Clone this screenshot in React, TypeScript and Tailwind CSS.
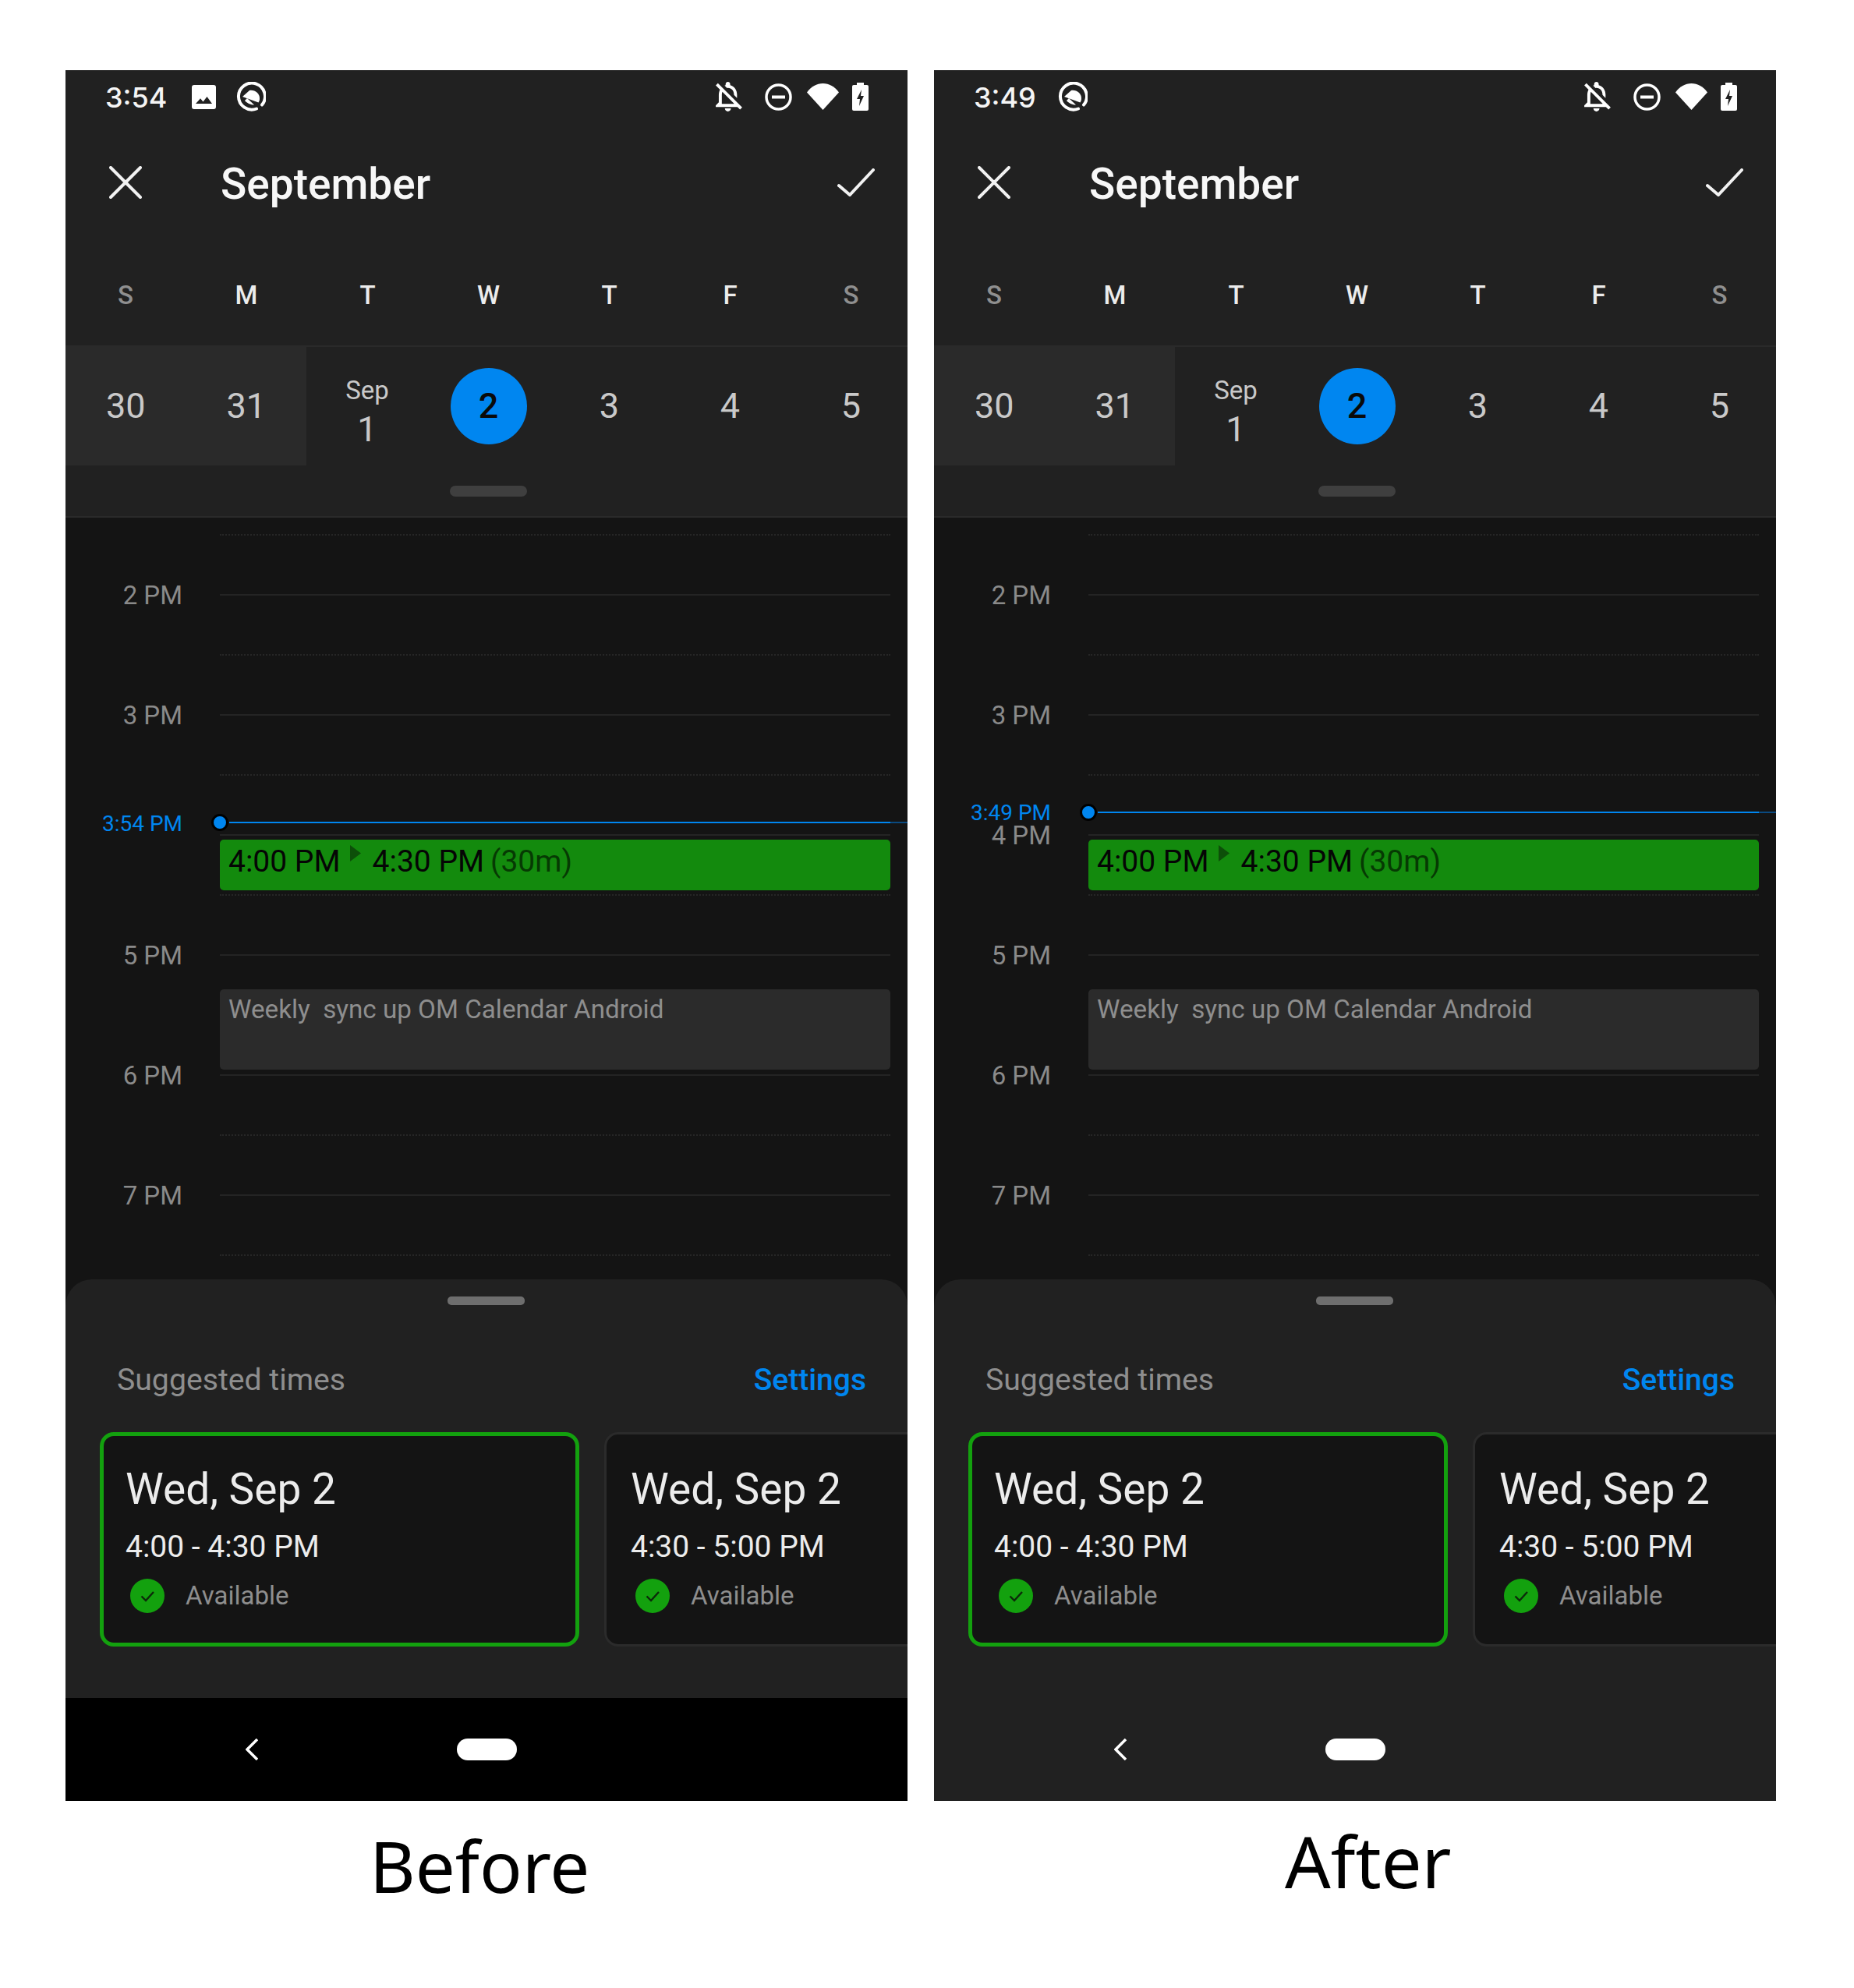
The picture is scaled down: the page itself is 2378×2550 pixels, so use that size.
import React from "react";

const hours: { label: string; half?: boolean }[] = [
  { label: "", half: true },
  { label: "2 PM" },
  { label: "", half: true },
  { label: "3 PM" },
  { label: "", half: true },
  { label: "4 PM" },
  { label: "", half: true },
  { label: "5 PM" },
  { label: "", half: true },
  { label: "6 PM" },
  { label: "", half: true },
  { label: "7 PM" },
  { label: "", half: true },
];

function ImageIcon() {
  return (
    <svg viewBox="0 0 31 31" className="w-[31px] h-[31px] mr-[26px]">
      <path fillRule="evenodd" fill="#fff" d="M3 0h25a3 3 0 0 1 3 3v25a3 3 0 0 1-3 3H3a3 3 0 0 1-3-3V3a3 3 0 0 1 3-3zM5 24h21l-6.5-9-5 6.5-3.5-4.2z" />
    </svg>
  );
}

function QIcon() {
  return (
    <svg viewBox="0 0 38 38" className="w-[38px] h-[38px]" fill="none">
      <path d="M33 29.5A17 17 0 1 0 26 34.5" stroke="#fff" strokeWidth="4" strokeLinecap="round" />
      <path fill="#fff" d="M8 19 L17 11 C24 10 30 15 30 21 C30 23.5 29.5 25 28.5 26.5 Z" />
      <path fill="#fff" d="M11 24 L14 21 L23 29.5 C19 29.5 14.5 28 11 24 Z" />
    </svg>
  );
}

function StatusRight() {
  return (
    <div className="flex items-center">
      <svg viewBox="4 2.5 17.4 19.5" className="w-[34px] h-[38px] mr-[29px]" fill="#fff">
        <path d="M12 22c1.1 0 2-.9 2-2h-4c0 1.1.9 2 2 2zm0-15.5c2.49 0 4 2.02 4 4.5v.1l2 2V11c0-3.07-1.63-5.64-4.5-6.32V4c0-.83-.67-1.5-1.5-1.5s-1.5.67-1.5 1.5v.68c-.24.06-.47.15-.69.23l1.64 1.64c.18-.02.36-.05.55-.05zM5.41 3.35L4 4.76l2.81 2.81C6.29 8.57 6 9.74 6 11v5l-2 2v1h14.24l1.74 1.74 1.41-1.41L5.41 3.35zM16 17H8v-6c0-.68.12-1.32.34-1.9L16 16.76V17z" />
      </svg>
      <svg viewBox="0 0 35 35" className="w-[35px] h-[35px] mr-[19px]" fill="none">
        <circle cx="17.5" cy="17.5" r="15.5" stroke="#fff" strokeWidth="3.5" />
        <rect x="9" y="15.5" width="17" height="4" fill="#fff" />
      </svg>
      <svg viewBox="0 0 41 34" className="w-[41px] h-[34px] mr-[17px]">
        <path fill="#fff" d="M20.5 34 L0 11.5 C5.5 4 12.5 0 20.5 0 C28.5 0 35.5 4 41 11.5 Z" />
      </svg>
      <svg viewBox="0 0 21 36" className="w-[21px] h-[36px]">
        <path fill="#fff" fillRule="evenodd" d="M6 0h9v3h4a2 2 0 0 1 2 2v29a2 2 0 0 1-2 2H2a2 2 0 0 1-2-2V5a2 2 0 0 1 2-2h4zM12 9l-6 12h4l-1 9 6-13h-4z" />
      </svg>
    </div>
  );
}

function Card({ time, selected }: { time: string; selected?: boolean }) {
  return (
    <div
      className={
        selected
          ? "w-[615px] h-[275px] shrink-0 rounded-[18px] border-[5px] border-[#13a10e] bg-[#141414] pl-[28px] pt-[36px]"
          : "w-[615px] h-[275px] shrink-0 rounded-[18px] border-[3px] border-[#2b2b2b] bg-[#141414] pl-[31px] pt-[38px]"
      }
    >
      <div className="text-[55px] leading-[64px] text-[#ececec]">Wed, Sep 2</div>
      <div className="text-[39px] leading-[46px] text-[#ececec] mt-[19px]">{time}</div>
      <div className="flex items-center mt-[18px] ml-[6px]">
        <svg viewBox="0 0 44 44" className="w-[44px] h-[44px]">
          <circle cx="22" cy="22" r="22" fill="#13a10e" />
          <path d="M14.5 22.5l5.5 5.5 10-11" stroke="#0c2a0a" strokeWidth="2.4" fill="none" />
        </svg>
        <span className="text-[33px] leading-[44px] text-[#8e8e8e] ml-[27px]">Available</span>
      </div>
    </div>
  );
}

function Phone({
  clock,
  nowLabel,
  showImage,
  hideFour,
  navBg,
  nowTop,
  nowLabelTop,
}: {
  clock: string;
  nowLabel: string;
  showImage?: boolean;
  hideFour?: boolean;
  navBg: string;
  nowTop: string;
  nowLabelTop: string;
}) {
  const weekdays = ["S", "M", "T", "W", "T", "F", "S"];
  return (
    <div className="w-[1080px] h-[2220px] flex flex-col overflow-hidden bg-[#141414] font-['Roboto',sans-serif]">
      <div className="bg-[#212121] border-b-2 border-[#2a2a2a] h-[574px] shrink-0">
        <div className="h-[66px] flex items-center justify-between pl-[51px] pr-[50px] pt-[2px]">
          <div className="flex items-center">
            <span
              className={
                showImage
                  ? "font-['Inter',sans-serif] font-medium text-[36px] leading-[44px] text-[#f5f5f5] w-[76px] mr-[35px] whitespace-nowrap pt-[2px]"
                  : "font-['Inter',sans-serif] font-medium text-[36px] leading-[44px] text-[#f5f5f5] w-[76px] mr-[32px] whitespace-nowrap pt-[2px]"
              }
            >
              {clock}
            </span>
            {showImage && <ImageIcon />}
            <QIcon />
          </div>
          <StatusRight />
        </div>
        <div className="h-[158px] flex items-center justify-between pl-[56px] pr-[42px]">
          <div className="flex items-center">
            <svg viewBox="0 0 42 42" className="w-[42px] h-[42px] mr-[101px] -mt-[3px]" stroke="#f2f2f2" strokeWidth="4" strokeLinecap="round">
              <path d="M2 2L40 40M40 2L2 40" />
            </svg>
            <span className="text-[55px] leading-[66px] font-medium text-[#f7f7f7] pt-[1px]">September</span>
          </div>
          <svg viewBox="0 0 48 36" className="w-[48px] h-[36px] -mt-[2px]" fill="none" stroke="#f2f2f2" strokeWidth="4" strokeLinecap="round">
            <path d="M2 22L16 34L46 2" />
          </svg>
        </div>
        <div className="h-[129px] grid grid-cols-[154px_156px_155px_155px_155px_155px_155px] items-center">
          {weekdays.map((d, i) => (
            <div
              key={i}
              className={
                i === 0 || i === 6
                  ? "text-center text-[33px] font-medium text-[#8f8f8f]"
                  : "text-center text-[33px] font-medium text-[#ececec]"
              }
            >
              {d}
            </div>
          ))}
        </div>
        <div className="h-[154px] border-t-2 border-[#2a2a2a] grid grid-cols-[154.5px_154.5px_156px_155px_155px_155px_155px] items-center text-[45px] text-[#c9c9c9]">
          <div className="h-full bg-[#2a2a2a] flex items-center justify-center">30</div>
          <div className="h-full bg-[#2a2a2a] flex items-center justify-center">31</div>
          <div className="flex flex-col items-center pt-[16px]">
            <span className="text-[33px] leading-[40px]">Sep</span>
            <span className="text-[45px] leading-[52px] mt-[4px]">1</span>
          </div>
          <div className="flex justify-center">
            <div className="w-[98px] h-[98px] rounded-full bg-[#0086f0] flex items-center justify-center font-medium text-[#0a0a0a]">2</div>
          </div>
          <div className="text-center">3</div>
          <div className="text-center">4</div>
          <div className="text-center">5</div>
        </div>
        <div className="w-[99px] h-[14px] rounded-[7px] bg-[#3f3f3f] ml-[493px] mt-[26px]" />
      </div>

      <div className="relative h-[977px] shrink-0 pt-[21px] bg-[#141414]">
        {hours.map((h, i) => (
          <div key={i} className="flex h-[77px]">
            <div className="w-[150px] h-[30px] -mt-[13px] text-right text-[33px] leading-[30px] text-[#8a8a8a] whitespace-nowrap">
              {h.label === "4 PM" && hideFour ? "" : h.label}
            </div>
            <div
              className={
                h.half
                  ? "ml-[48px] mr-[22px] flex-1 border-t-2 border-dotted border-[#262626]"
                  : "ml-[48px] mr-[22px] flex-1 border-t-2 border-[#242424]"
              }
            />
          </div>
        ))}

        <div className="absolute left-[198px] right-[22px] top-[413px] h-[65px] rounded-[5px] bg-[#138a0d] pl-[11px] flex items-center text-[39px] leading-[50px] text-[#050505] whitespace-nowrap">
          <span className="-mt-[10px]">4:00 PM</span>
          <svg viewBox="0 0 14 21" className="w-[14px] h-[21px] ml-[12px] mr-[15px] -mt-[30px]">
            <path d="M0 0L14 10.5L0 21z" fill="#0d4f09" />
          </svg>
          <span className="-mt-[10px]">4:30 PM</span>
          <span className="-mt-[10px] ml-[8px] text-[#063a03]">(30m)</span>
        </div>
        <div className="absolute left-[198px] right-[22px] top-[605px] h-[103px] rounded-[5px] bg-[#2b2b2b] pl-[11px] pt-[6px] text-[33.2px] leading-[40px] text-[#8e8e8e] whitespace-pre">
          Weekly  sync up OM Calendar Android
        </div>

        <div className={`absolute left-[0px] w-[150px] text-right text-[28px] leading-[26px] text-[#0086f0] ${nowLabelTop}`}>{nowLabel}</div>
        <div className={`absolute left-[187px] right-0 h-[22px] flex items-center ${nowTop}`}>
          <div className="w-[22px] h-[22px] rounded-full bg-[#0086f0] border-[3px] border-black shrink-0" />
          <div className="flex-1 h-[2px] bg-[#0086f0] ml-[1px]" />
          <div className="w-[22px] h-[2px] bg-[#0a4a80]" />
        </div>
      </div>

      <div className="h-[537px] shrink-0 rounded-t-[34px] bg-[#212121] pt-[22px] overflow-hidden">
        <div className="w-[99px] h-[11px] rounded-[5px] bg-[#6e6e6e] ml-[490px]" />
        <div className="flex items-center justify-between pl-[66px] pr-[53px] mt-[70px]">
          <span className="text-[39.2px] leading-[52px] text-[#8e8e8e]">Suggested times</span>
          <span className="text-[39px] leading-[52px] font-medium text-[#0086f0]">Settings</span>
        </div>
        <div className="flex gap-[32px] pl-[44px] mt-[41px]">
          <Card time="4:00 - 4:30 PM" selected />
          <Card time="4:30 - 5:00 PM" />
        </div>
      </div>

      <div className={`h-[132px] shrink-0 flex items-center ${navBg}`}>
        <svg viewBox="0 0 16 28" className="w-[16px] h-[28px] ml-[231px]" fill="none" stroke="#fff" strokeWidth="3.5">
          <path d="M15 1L2 14L15 27" />
        </svg>
        <div className="w-[77px] h-[28px] rounded-full bg-white ml-[255px]" />
      </div>
    </div>
  );
}

export default function App() {
  return (
    <div className="w-[2378px] h-[2550px] bg-white pt-[90px] pl-[84px] flex gap-[34px]">
      <div className="w-[1080px]">
        <Phone clock="3:54" nowLabel="3:54 PM" showImage hideFour navBg="bg-black" nowTop="top-[380px]" nowLabelTop="top-[380px]" />
        <div className="ml-[390px] mt-[19px] font-['Noto_Sans',sans-serif] text-[90.5px] leading-[128px] text-black">Before</div>
      </div>
      <div className="w-[1080px]">
        <Phone clock="3:49" nowLabel="3:49 PM" navBg="bg-[#212121]" nowTop="top-[367px]" nowLabelTop="top-[366px]" />
        <div className="ml-[450px] mt-[13px] font-['Noto_Sans',sans-serif] text-[92px] leading-[128px] text-black">After</div>
      </div>
    </div>
  );
}
